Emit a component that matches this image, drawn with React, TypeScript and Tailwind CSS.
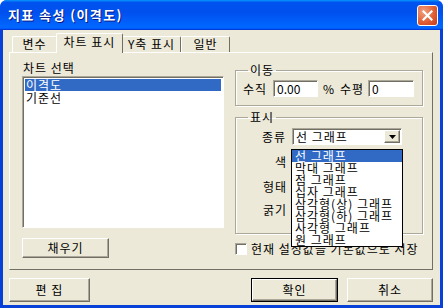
import { ReactNode } from "react"

const raised =
  "border border-t-white border-l-white border-r-[#716F64] border-b-[#716F64] shadow-[inset_-1px_-1px_0_#ACA899]"
const sunken =
  "border border-t-[#ACA899] border-l-[#ACA899] border-r-white border-b-white shadow-[inset_1px_1px_0_#716F64]"

const tabs = [
  { label: "변수", cls: "w-[45px] h-[16px] pt-[0px]" },
  { label: "차트 표시", cls: "w-[67px] h-[20px] pt-[1px] -mb-px z-10 -mx-[1px]", active: true },
  { label: "Y축 표시", cls: "w-[59px] h-[16px] pt-[0px]" },
  { label: "일반", cls: "w-[49px] h-[16px] pt-[0px]" },
]

const chartTypes = [
  "선 그래프",
  "막대 그래프",
  "점 그래프",
  "십자 그래프",
  "삼각형(상) 그래프",
  "삼각형(하) 그래프",
  "사각형 그래프",
  "원 그래프",
]

const Group = ({ title, children, className }: { title: string; children: ReactNode; className?: string }) => (
  <fieldset className={`border border-[#ACA899] shadow-[1px_1px_0_white,inset_1px_1px_0_white] ${className ?? ""}`}>
    <legend className="ml-[12px] px-[2px] leading-[14px]">{title}</legend>
    {children}
  </fieldset>
)

const Button = ({ children, className, isDefault }: { children: ReactNode; className: string; isDefault?: boolean }) => (
  <div className={isDefault ? `border border-black ${className}` : className}>
    <div className={`h-full w-full flex items-center justify-center ${raised}`}>{children}</div>
  </div>
)

export default function App() {
  return (
    <div className="w-[443px] h-[308px] flex flex-col bg-[#0841D8] rounded-t-[7px] overflow-hidden font-['Noto_Sans_CJK_KR',sans-serif] text-[12px] leading-[14px] tracking-[1px] text-black">
      {/* title bar */}
      <div className="h-[30px] shrink-0 flex items-center justify-between pl-[8px] pr-[5px] bg-[linear-gradient(180deg,#0997ff,#0053ee_8%,#0050ee_40%,#0066ff_88%,#0066ff_93%,#005bff_95%,#003dd7_96%,#003dd7)]">
        <span className="text-white font-bold text-[13px] tracking-[1.4px] [text-shadow:1px_1px_0_#0a1883]">지표 속성 (이격도)</span>
        <div className="w-[21px] h-[21px] rounded-[3px] border border-white bg-[radial-gradient(circle_at_30%_30%,#f0a080,#e05a30_60%,#c13d1c)] flex items-center justify-center">
          <svg width="11" height="11" viewBox="0 0 11 11">
            <path d="M1.5 1.5 L9.5 9.5 M9.5 1.5 L1.5 9.5" stroke="white" strokeWidth="2.2" strokeLinecap="square" />
          </svg>
        </div>
      </div>

      {/* body */}
      <div className="flex-1 mx-[3px] mb-[3px] bg-[#ECE9D8] pl-[6px] pr-[7px] pt-[2px] flex flex-col">
        {/* tabs */}
        <div className="h-[20px] flex items-end pl-[3px]">
          {tabs.map((t) => (
            <div
              key={t.label}
              className={`relative flex justify-center bg-[#ECE9D8] border-t border-l border-r border-t-white border-l-white border-r-[#716F64] rounded-t-[2px] ${t.cls}`}
            >
              {t.label}
            </div>
          ))}
        </div>

        {/* tab panel */}
        <div className="h-[218px] flex border border-t-white border-l-white border-r-[#716F64] border-b-[#716F64] pl-[12px] pt-[8px]">
          <div className="w-[202px] flex flex-col">
            <span className="pl-px">차트 선택</span>
            <div className={`mt-[1px] h-[152px] bg-white p-[2px] ${sunken}`}>
              <div className="h-[12px] leading-[12px] bg-[#316AC5] text-white pl-[1px]">이격도</div>
              <div className="h-[13px] leading-[13px] pl-[1px]">기준선</div>
            </div>
            <Button className="mt-[10px] w-[87px] h-[20px]">채우기</Button>
          </div>

          <div className="ml-[11px] w-[188px] flex flex-col">
            <Group title="이동" className="mt-[2px]">
              <div className="mt-[3px] mb-[8px] h-[17px] flex items-center pl-[7px]">
                <span className="w-[30px]">수직</span>
                <div className={`w-[45px] h-[17px] bg-white pl-[3px] flex items-center tracking-normal ${sunken}`}>0.00</div>
                <span className="ml-[5px] w-[17px]">%</span>
                <span className="w-[28px]">수평</span>
                <div className={`w-[46px] h-[17px] bg-white pl-[3px] flex items-center tracking-normal ${sunken}`}>0</div>
              </div>
            </Group>

            <Group title="표시" className="mt-[4px]">
              <div className="mt-[4px] h-[17px] flex items-center pl-[26px]">
                <span className="w-[30px] whitespace-nowrap">종류</span>
                <div className="relative">
                  <div className={`w-[110px] h-[17px] bg-white flex items-center justify-between pl-[3px] pr-[1px] ${sunken}`}>
                    <span>선 그래프</span>
                    <div className={`w-[16px] h-[13px] bg-[#ECE9D8] flex items-center justify-center ${raised}`}>
                      <svg width="7" height="4" viewBox="0 0 7 4">
                        <path d="M0 0 H7 L3.5 4 Z" fill="black" />
                      </svg>
                    </div>
                  </div>
                  <div className="absolute left-[-1px] top-[21px] w-[112px] border border-black bg-white z-20">
                    {chartTypes.map((c, i) => (
                      <div
                        key={c}
                        className={`h-[12px] leading-[12px] pl-[3px] whitespace-nowrap ${i === 0 ? "bg-[#316AC5] text-white" : ""}`}
                      >
                        {c}
                      </div>
                    ))}
                  </div>
                </div>
              </div>
              <div className="mt-[8px] h-[18px] flex items-center pl-[21px]">
                <span className="w-[30px] text-right whitespace-nowrap">색</span>
              </div>
              <div className="mt-[7px] h-[18px] flex items-center pl-[21px]">
                <span className="w-[30px] text-right whitespace-nowrap">형태</span>
              </div>
              <div className="mt-[5px] mb-[14px] h-[18px] flex items-center pl-[21px]">
                <span className="w-[30px] text-right whitespace-nowrap">굵기</span>
              </div>
            </Group>

            <div className="mt-[8px] flex items-center">
              <div className={`w-[12px] h-[12px] bg-white ${sunken}`} />
              <span className="ml-[4px] whitespace-nowrap">현재 설정값을 기본값으로 저장</span>
            </div>
          </div>
        </div>

        {/* bottom buttons */}
        <div className="mt-[8px] h-[24px] flex justify-between">
          <Button className="w-[81px] h-[24px]">편 집</Button>
          <div className="flex gap-[9px]">
            <Button className="w-[87px] h-[24px]" isDefault>
              확인
            </Button>
            <Button className="w-[86px] h-[24px]">취소</Button>
          </div>
        </div>
      </div>
    </div>
  )
}
